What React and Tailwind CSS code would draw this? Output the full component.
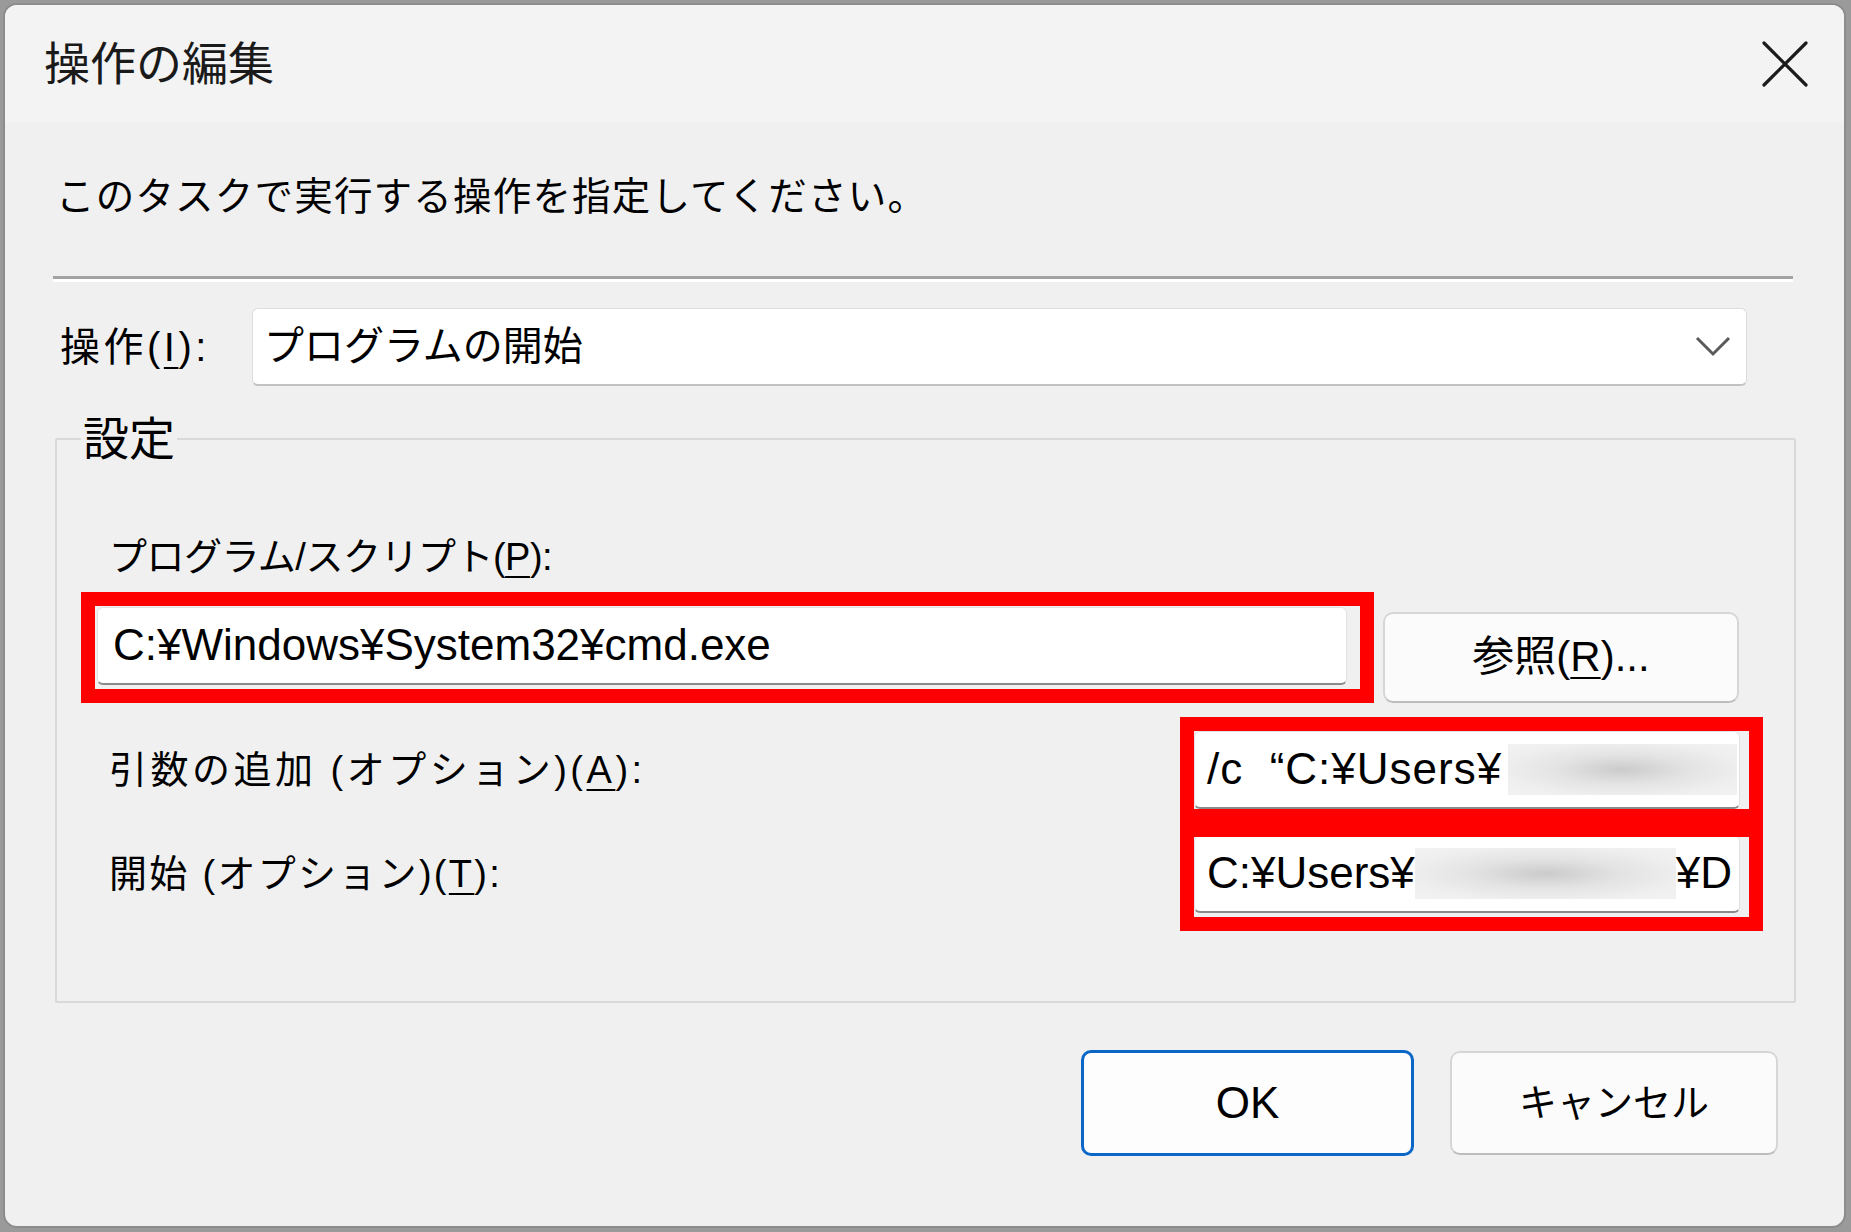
import React from 'react';

const fieldBox =
  'bg-white border border-[#e2e2e2] border-b-2 border-b-[#8a8a8a] rounded-[6px] flex items-center overflow-hidden';

function Blur({ className }) {
  return (
    <span
      className={`block shrink-0 h-[51px] bg-[radial-gradient(ellipse_at_center,#cbcbcb_0%,#e3e3e3_40%,#efefef_75%,#f2f2f2_100%)] ${className}`}
    />
  );
}

function RedBox({ className }) {
  return <div className={`absolute border-[14px] border-[#ff0000] pointer-events-none ${className}`} />;
}

export default function App() {
  return (
    <div className="w-[1851px] h-[1232px] bg-[#9a9a9a] pt-[3px] pl-[3px] font-['Liberation_Sans','Noto_Sans_CJK_JP',sans-serif] text-black">
      <div className="relative w-[1843px] h-[1225px] rounded-[14px] border-2 border-[#8c8c8c] bg-[#f0f0f0] overflow-hidden flex flex-col">
        {/* title bar */}
        <div className="h-[118px] shrink-0 bg-[#f3f3f3] flex items-center justify-between pl-[39px] pr-[36px]">
          <span className="text-[46px] leading-none text-[#1a1a1a]">操作の編集</span>
          <svg width="46" height="46" viewBox="0 0 46 46">
            <path d="M2 2 L44 44 M44 2 L2 44" stroke="#1b1b1b" strokeWidth="3.2" strokeLinecap="round" />
          </svg>
        </div>

        {/* body */}
        <div className="flex-1 pl-[48px] flex flex-col">
          <p className="mt-[55px] ml-[3px] text-[38.5px] tracking-[1.2px] leading-none">このタスクで実行する操作を指定してください。</p>
          <div className="mt-[59px] w-[1740px] h-[6px] border-t-[3px] border-t-[#a3a3a3] border-b-[3px] border-b-white" />

          <div className="mt-[26px] flex items-center h-[78px]">
            <span className="ml-[7px] w-[192px] text-[40px] tracking-[3.5px] leading-none">
              操作(<span className="underline underline-offset-[6px] decoration-2">I</span>):
            </span>
            <div className="w-[1495px] h-[78px] bg-white border border-[#dcdcdc] border-b-2 border-b-[#c2c2c2] rounded-[6px] flex items-center justify-between pl-[11px] pr-[15px]">
              <span className="text-[40px] leading-none">プログラムの開始</span>
              <svg width="36" height="22" viewBox="0 0 36 22">
                <polyline points="2,3 18,19 34,3" fill="none" stroke="#5a5a5a" strokeWidth="3" />
              </svg>
            </div>
          </div>

          <fieldset className="mt-[30px] ml-[2px] w-[1741px] min-w-0 border-2 border-[#d9d9d9] rounded-[2px] pl-[40px] pr-[54px] pb-[88px]">
            <legend className="-ml-[16px] px-[2px] text-[46px] leading-none">設定</legend>

            <div className="mt-[75px] h-[40px] flex items-center">
              <span className="ml-[12px] text-[38px] tracking-[-0.5px] leading-none">
                プログラム/スクリプト(<span className="underline underline-offset-[6px] decoration-2">P</span>):
              </span>
            </div>

            <div className="mt-[30px] flex items-start gap-[36px]">
              <div className={`${fieldBox} w-[1250px] h-[78px] pl-[15px]`}>
                <span className="text-[44px] leading-none whitespace-nowrap">C:¥Windows¥System32¥cmd.exe</span>
              </div>
              <button className="mt-[5px] w-[356px] h-[91px] rounded-[10px] bg-[#fbfbfb] border-2 border-[#d6d6d6] border-b-[#bcbcbc] text-[42px] leading-none flex items-center justify-center">
                参照(<span className="underline underline-offset-[6px] decoration-2">R</span>)...
              </button>
            </div>

            <div className="mt-[28px] flex items-center justify-between">
              <span className="ml-[12px] text-[38px] tracking-[3.5px] leading-none">
                引数の追加 (オプション)(<span className="underline underline-offset-[6px] decoration-2">A</span>):
              </span>
              <div className={`${fieldBox} w-[546px] h-[78px] pl-[12px] pr-[2px] justify-between`}>
                <span className="text-[44px] leading-none whitespace-nowrap tracking-[1px]">/c&nbsp;&nbsp;“C:¥Users¥</span>
                <Blur className="w-[229px]" />
              </div>
            </div>

            <div className="mt-[26px] flex items-center justify-between">
              <span className="ml-[12px] text-[38px] tracking-[2.3px] leading-none">
                開始 (オプション)(<span className="underline underline-offset-[6px] decoration-2">T</span>):
              </span>
              <div className={`${fieldBox} w-[546px] h-[78px] pl-[12px]`}>
                <span className="text-[44px] leading-none whitespace-nowrap">C:¥Users¥</span>
                <Blur className="w-[261px]" />
                <span className="text-[44px] leading-none whitespace-nowrap">¥D</span>
              </div>
            </div>
          </fieldset>

          <div className="mt-[47px] flex items-center justify-end gap-[36px] pr-[66px]">
            <button className="w-[333px] h-[106px] rounded-[10px] border-[3px] border-[#0a67c8] bg-[#fdfdfd] text-[44px] leading-none flex items-center justify-center">
              OK
            </button>
            <button className="w-[328px] h-[104px] rounded-[10px] border-2 border-[#d6d6d6] border-b-[#bcbcbc] bg-[#fbfbfb] text-[38px] leading-none flex items-center justify-center">
              キャンセル
            </button>
          </div>
        </div>

        {/* annotation boxes */}
        <RedBox className="left-[76px] top-[587px] w-[1293px] h-[111px]" />
        <RedBox className="left-[1175px] top-[712px] w-[583px] h-[106px]" />
        <RedBox className="left-[1175px] top-[818px] w-[583px] h-[108px]" />
      </div>
    </div>
  );
}
